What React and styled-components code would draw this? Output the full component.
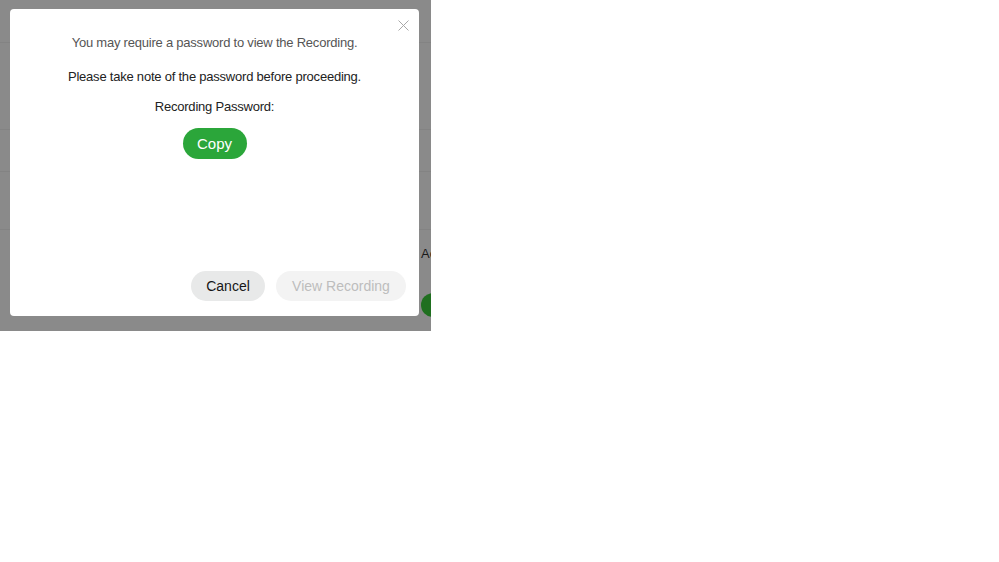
import React from "react";
import styled, { createGlobalStyle } from "styled-components";

const Global = createGlobalStyle`
  html, body { margin: 0; padding: 0; background: #ffffff; }
  body { font-family: "Liberation Sans", Arial, sans-serif; }
  * { box-sizing: border-box; }
`;

const Stage = styled.div`
  position: relative;
  width: 431px;
  height: 331px;
  overflow: hidden;
  background: #8a8a8a;
`;

const PageRows = styled.div`
  display: flex;
  flex-direction: column;
`;

const PageRow = styled.div`
  height: ${(p) => p.$h}px;
  border-bottom: ${(p) => (p.$last ? "none" : "1px solid #838383")};
  padding: ${(p) => p.$pad || "0"};
  display: flex;
  flex-direction: column;
  align-items: flex-start;
`;

const PeekText = styled.span`
  margin-left: 421px;
  font-size: 13px;
  line-height: 16px;
  color: #1a1a1a;
  white-space: nowrap;
`;

const PeekButton = styled.span`
  margin-left: 421px;
  margin-top: 31px;
  width: 24px;
  height: 24px;
  border-radius: 50%;
  background: #1f6f1f;
  flex: none;
`;

const Modal = styled.div`
  position: absolute;
  left: 10px;
  top: 9px;
  width: 409px;
  height: 307px;
  background: #ffffff;
  border-radius: 4px;
  display: flex;
  flex-direction: column;
  padding: 26px 13px 15px 13px;
`;

const CloseButton = styled.button`
  position: absolute;
  top: 10px;
  right: 10px;
  width: 12px;
  height: 12px;
  padding: 0;
  border: none;
  background: transparent;
  display: flex;
  align-items: center;
  justify-content: center;
  cursor: pointer;
`;

const Body = styled.div`
  flex: 1;
  display: flex;
  flex-direction: column;
  align-items: center;
`;

const Line = styled.p`
  margin: 0 0 ${(p) => p.$mb}px 0;
  font-size: 13px;
  line-height: 16px;
  letter-spacing: -0.22px;
  color: ${(p) => p.$color};
  text-align: center;
`;

const CopyButton = styled.button`
  margin-top: 7px;
  width: 64px;
  height: 31px;
  border: none;
  border-radius: 16px;
  background: #2ba63a;
  color: #ffffff;
  font-family: inherit;
  font-size: 15px;
  cursor: pointer;
`;

const Footer = styled.div`
  display: flex;
  justify-content: flex-end;
  gap: 11px;
`;

const PillButton = styled.button`
  height: 30px;
  width: ${(p) => p.$w}px;
  padding: 0 0 1px 0;
  border: none;
  border-radius: 15px;
  background: ${(p) => (p.$disabled ? "#f3f3f3" : "#e8e9e9")};
  color: ${(p) => (p.$disabled ? "#bdbdbd" : "#161616")};
  font-family: inherit;
  font-size: 14px;
  cursor: ${(p) => (p.$disabled ? "default" : "pointer")};
`;

export default function App() {
  return (
    <>
      <Global />
      <Stage>
        <PageRows>
          <PageRow $h={43} />
          <PageRow $h={87} />
          <PageRow $h={42} />
          <PageRow $h={58} />
          <PageRow $h={100} $last $pad="16px 0 0 0">
            <PeekText>Ac</PeekText>
            <PeekButton />
          </PageRow>
        </PageRows>
        <Modal>
          <CloseButton aria-label="Close">
            <svg width="11" height="11" viewBox="0 0 11 11">
              <path d="M0.5 0.5 L10.5 10.5 M10.5 0.5 L0.5 10.5" stroke="#a8a8a8" strokeWidth="1" fill="none" />
            </svg>
          </CloseButton>
          <Body>
            <Line $color="#555555" $mb={18}>You may require a password to view the Recording.</Line>
            <Line $color="#222222" $mb={14}>Please take note of the password before proceeding.</Line>
            <Line $color="#222222" $mb={6}>Recording Password:</Line>
            <CopyButton>Copy</CopyButton>
          </Body>
          <Footer>
            <PillButton $w={74}>Cancel</PillButton>
            <PillButton $w={130} $disabled>View Recording</PillButton>
          </Footer>
        </Modal>
      </Stage>
    </>
  );
}
